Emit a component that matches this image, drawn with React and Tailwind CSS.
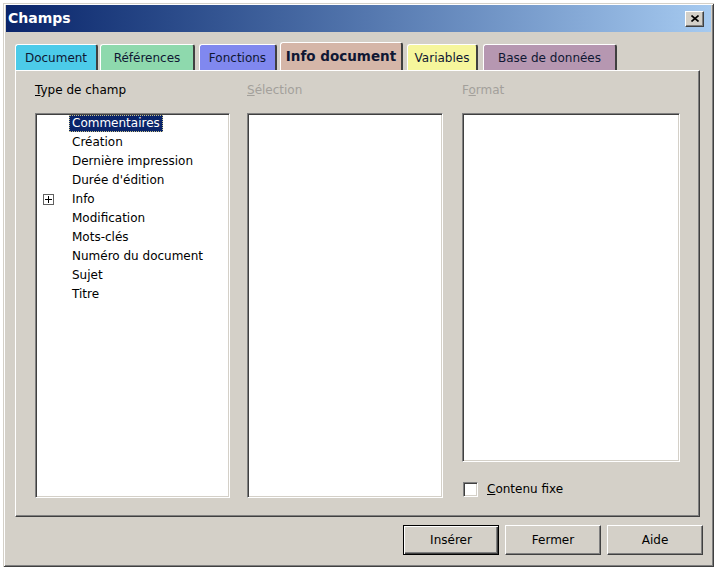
const TABS = [
  { label: 'Document', w: 'w-[83px]', ml: 'ml-0', bg: 'bg-[#4ccbe9]' },
  { label: 'Références', w: 'w-[95px]', ml: 'ml-[2px]', bg: 'bg-[#8ed9ad]' },
  { label: 'Fonctions', w: 'w-[78px]', ml: 'ml-[4px]', bg: 'bg-[#8088ef]' },
  { label: 'Info document', w: 'w-[123px]', ml: 'ml-[3px]', bg: 'bg-[#d5b6a8]', active: true },
  { label: 'Variables', w: 'w-[71px]', ml: 'ml-[4px]', bg: 'bg-[#f6f69c]' },
  { label: 'Base de données', w: 'w-[134px]', ml: 'ml-[5px]', bg: 'bg-[#b697b1]' },
]

const FIELDS = [
  'Commentaires',
  'Création',
  'Dernière impression',
  "Durée d'édition",
  'Info',
  'Modification',
  'Mots-clés',
  'Numéro du document',
  'Sujet',
  'Titre',
]

const raised =
  'border border-t-white border-l-white border-r-[#404040] border-b-[#404040] shadow-[inset_-1px_-1px_0_#808080]'
const sunken =
  'border border-t-[#808080] border-l-[#808080] border-r-white border-b-white shadow-[inset_1px_1px_0_#404040,inset_-1px_-1px_0_#d4d0c8]'

function PlusBox() {
  return (
    <span className="w-[11px] h-[11px] border border-[#606060] bg-white flex items-center justify-center">
      <svg viewBox="0 0 7 7" className="w-[7px] h-[7px]">
        <path d="M0 3.5h7M3.5 0v7" stroke="#000" strokeWidth="1" />
      </svg>
    </span>
  )
}

function Button({ children, isDefault }) {
  return (
    <button
      className={`w-[96px] h-[30px] text-[12px] text-black bg-[#d4d0c8] flex items-center justify-center ${
        isDefault
          ? 'border border-black shadow-[inset_1px_1px_0_#fff,inset_-1px_-1px_0_#404040,inset_-2px_-2px_0_#808080]'
          : raised
      }`}
    >
      {children}
    </button>
  )
}

export default function App() {
  return (
    <div className="w-[717px] h-[571px] bg-white pl-[3px] pt-[3px] font-['DejaVu_Sans',sans-serif] text-black">
      <div className="w-[711px] h-[564px] bg-[#d4d0c8] flex flex-col pt-[2px] px-[3px] shadow-[inset_1px_1px_0_#d4d0c8,inset_-1px_-1px_0_#404040,inset_2px_2px_0_#fff,inset_-2px_-2px_0_#808080]">
        <div className="h-[27px] flex items-center justify-between bg-linear-to-r from-[#0a246a] to-[#a6caf0] pl-[2px] pr-[7px]">
          <span className="text-white font-bold text-[14px]">Champs</span>
          <span className={`w-[19px] h-[16px] bg-[#d4d0c8] flex items-center justify-center ${raised}`}>
            <svg viewBox="0 0 8 7" className="w-[8px] h-[7px]">
              <path d="M0.5 0.5l7 6M7.5 0.5l-7 6" stroke="#000" strokeWidth="1.6" />
            </svg>
          </span>
        </div>

        <div className="pl-[9px] pt-[10px] flex items-end h-[38px]">
          {TABS.map((t) => (
            <div
              key={t.label}
              className={`${t.w} ${t.ml} ${t.bg} ${
                t.active ? 'h-[28px] font-bold text-[13.5px]' : 'h-[26px] text-[12px]'
              } rounded-t-[3px] border-t border-l border-t-white border-l-white border-r-2 border-r-[#404040] flex items-center justify-center text-[#0f1733]`}
            >
              {t.label}
            </div>
          ))}
        </div>

        <div className={`ml-[9px] w-[685px] h-[447px] pl-[19px] pt-[11px] flex gap-[17px] ${raised}`}>
          <div className="w-[195px] flex flex-col">
            <div className="h-[16px] text-[12px] leading-[16px]">
              <span className="underline">T</span>ype de champ
            </div>
            <div className={`mt-[15px] h-[385px] bg-white text-[12px] ${sunken}`}>
              {FIELDS.map((f, i) => (
                <div key={f} className="h-[19px] flex items-center pl-[7px]">
                  <span className="w-[26px] flex items-center">{f === 'Info' && <PlusBox />}</span>
                  <span
                    className={`px-[3px] h-[17px] leading-[17px] whitespace-nowrap ${
                      i === 0
                        ? 'bg-[#0a246a] text-white outline outline-1 outline-dotted outline-[#c8c28a] -outline-offset-1'
                        : ''
                    }`}
                  >
                    {f}
                  </span>
                </div>
              ))}
            </div>
          </div>

          <div className="w-[196px] flex flex-col">
            <div className="h-[16px] text-[12px] leading-[16px] text-[#a3a09b]">
              <span className="underline">S</span>élection
            </div>
            <div className={`mt-[15px] h-[385px] bg-white ${sunken}`} />
          </div>

          <div className="w-[218px] ml-[2px] flex flex-col">
            <div className="h-[16px] text-[12px] leading-[16px] text-[#a3a09b]">
              F<span className="underline">o</span>rmat
            </div>
            <div className={`mt-[15px] h-[349px] bg-white ${sunken}`} />
            <div className="mt-[19px] h-[16px] flex items-center gap-[9px] pl-[1px]">
              <span className={`w-[15px] h-[15px] bg-white ${sunken}`} />
              <span className="text-[12px]">
                <span className="underline">C</span>ontenu fixe
              </span>
            </div>
          </div>
        </div>

        <div className="mt-[8px] pr-[8px] flex justify-end gap-[6px]">
          <Button isDefault>Insérer</Button>
          <Button>Fermer</Button>
          <Button>Aide</Button>
        </div>
      </div>
    </div>
  )
}
